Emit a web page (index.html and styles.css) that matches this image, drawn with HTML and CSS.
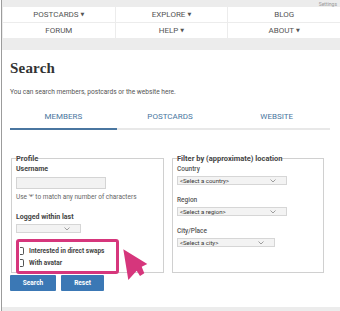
FILE: index.html
```html
<!DOCTYPE html>
<html lang="en">
  <head>
    <meta charset="utf-8" />
    <title>Search</title>
    <link rel="stylesheet" href="styles.css">
  </head>
  <body>
    <div class="page">
      <div class="topbar"><span class="settings">Settings</span></div>
      <nav class="nav">
        <a class="nav-cell">POSTCARDS <span class="caret">&#9660;</span></a>
        <a class="nav-cell">EXPLORE <span class="caret">&#9660;</span></a>
        <a class="nav-cell">BLOG</a>
        <a class="nav-cell">FORUM</a>
        <a class="nav-cell">HELP <span class="caret">&#9660;</span></a>
        <a class="nav-cell">ABOUT <span class="caret">&#9660;</span></a>
      </nav>

      <div class="main">
        <h1>Search</h1>
        <p class="intro">You can search members, postcards or the website here.</p>

        <div class="tabs">
          <div class="tab active">MEMBERS</div>
          <div class="tab">POSTCARDS</div>
          <div class="tab">WEBSITE</div>
        </div>

        <div class="forms">
          <fieldset class="box profile">
            <legend>Profile</legend>
            <div class="label">Username</div>
            <div class="input"></div>
            <div class="hint">Use '*' to match any number of characters</div>
            <div class="label logged">Logged within last</div>
            <div class="select small"><span></span>
              <svg class="chev" width="6" height="4" viewBox="0 0 6 4"><path d="M0.5 0.5 L3 3 L5.5 0.5" fill="none" stroke="#888" stroke-width="0.8"/></svg>
            </div>
            <div class="marked">
              <div class="check"><span class="cb"></span>Interested in direct swaps</div>
              <div class="check"><span class="cb"></span>With avatar</div>
            </div>
          </fieldset>

          <fieldset class="box filter">
            <legend>Filter by (approximate) location</legend>
            <div class="label thin">Country</div>
            <div class="select"><span>&lt;Select a country&gt;</span>
              <svg class="chev" width="6" height="4" viewBox="0 0 6 4"><path d="M0.5 0.5 L3 3 L5.5 0.5" fill="none" stroke="#888" stroke-width="0.8"/></svg>
            </div>
            <div class="label thin gap">Region</div>
            <div class="select"><span>&lt;Select a region&gt;</span>
              <svg class="chev" width="6" height="4" viewBox="0 0 6 4"><path d="M0.5 0.5 L3 3 L5.5 0.5" fill="none" stroke="#888" stroke-width="0.8"/></svg>
            </div>
            <div class="label thin gap">City/Place</div>
            <div class="select city"><span>&lt;Select a city&gt;</span>
              <svg class="chev" width="6" height="4" viewBox="0 0 6 4"><path d="M0.5 0.5 L3 3 L5.5 0.5" fill="none" stroke="#888" stroke-width="0.8"/></svg>
            </div>
          </fieldset>
        </div>

        <div class="buttons">
          <button class="btn search">Search</button>
          <button class="btn reset">Reset</button>
        </div>
      </div>

      <div class="footer"></div>

      <!-- annotation arrow -->
      <svg class="pointer" width="32" height="38" viewBox="0 0 32 38">
        <polygon points="3.3,3.3 27.3,18 21.7,20.7 24.3,27.3 20,30 16.7,24.7 8.3,34" fill="#d6367c"/>
      </svg>
    </div>
  </body>
</html>
```

FILE: styles.css
```css
body{
  margin: 0;
  background: #fff;
  font-family: Roboto, "Liberation Sans", sans-serif;
  color: #444;
}
.page{
  position: relative;
  margin-left: 1px;
  border-left: 1px solid #9c9c9c;
  min-height: 311px;
}
.topbar{
  height: 7px;
  background: #ececec;
  text-align: right;
  padding-right: 3px;
}
.settings{
  display: inline-block;
  font-size: 5px;
  line-height: 5px;
  margin-top: 2px;
  color: #999;
  white-space: nowrap;
  vertical-align: top;
}
.nav{
  display: grid;
  grid-template-columns: 1fr 1fr 1fr;
  gap: 1px;
  background: #ececec;
  padding: 0 0 12px 1px;
}
.nav-cell{
  background: #fff;
  height: 15px;
  line-height: 15px;
  text-align: center;
  font-size: 8px;
  color: #555;
}
.caret{
  font-family: "DejaVu Sans", sans-serif;
  font-size: 5px;
  vertical-align: 1px;
}

.main{
  padding: 0 10px 0 8px;
}
h1{
  font-family: "Liberation Serif", serif;
  font-weight: bold;
  font-size: 15px;
  line-height: 18px;
  margin: 9px 0 0;
  color: #333;
  letter-spacing: 0.2px;
}
.intro{
  font-size: 6.6px;
  line-height: 8px;
  margin: 11px 0 0;
  color: #555;
}

.tabs{
  display: flex;
  margin-top: 16px;
}
.tab{
  flex: 1;
  text-align: center;
  font-size: 8px;
  line-height: 10px;
  padding-bottom: 6px;
  color: #4a76a0;
  border-bottom: 2px solid #e8e8e8;
}
.tab.active{
  border-bottom-color: #4a76a0;
}

.forms{
  display: flex;
  gap: 8px;
  margin-top: 24px;
  padding-left: 1px;
}
.box{
  margin: 0;
  border: 1px solid #d0d0d0;
  padding: 0 4px;
  min-width: 0;
}
.profile{
  width: 153px;
  box-sizing: border-box;
  padding-bottom: 0;
}
.filter{
  width: 152px;
  box-sizing: border-box;
  height: 119px;
}
legend{
  font-size: 7.5px;
  font-weight: bold;
  line-height: 9px;
  padding: 0;
  color: #444;
}
.label{
  font-size: 7px;
  font-weight: bold;
  line-height: 9px;
  margin-top: 2px;
  color: #444;
}
.label.thin{
  font-weight: 500;
  font-size: 6.5px;
  color: #555;
}
.label.gap{
  margin-top: 11px;
}
.label.logged{
  margin-top: 12px;
}
.input{
  width: 90px;
  height: 12px;
  box-sizing: border-box;
  margin-top: 3px;
  background: #f2f2f2;
  border: 1px solid #d4d4d4;
}
.hint{
  font-size: 6.5px;
  line-height: 8px;
  margin-top: 4px;
  color: #666;
}
.select{
  display: flex;
  align-items: center;
  justify-content: space-between;
  width: 110px;
  height: 9px;
  box-sizing: border-box;
  margin-top: 2px;
  padding: 0 10px 0 2px;
  background: #f3f3f3;
  border: 1px solid #d6d6d6;
  font-size: 6px;
  color: #333;
}
.select.small{
  width: 65px;
}
.select.city{
  width: 98px;
}
.chev{
  display: block;
}

.marked{
  width: 103px;
  height: 35px;
  box-sizing: border-box;
  margin: 6px 0 -2px 0;
  border: 3px solid #d6367c;
  border-radius: 3px;
  padding-top: 3px;
}
.check{
  display: flex;
  align-items: center;
  height: 12px;
  font-size: 6.5px;
  font-weight: bold;
  color: #444;
}
.cb{
  display: inline-block;
  width: 3px;
  height: 6px;
  border: 1px solid #555;
  border-left: none;
  border-radius: 0 2px 2px 0;
  margin: 0 5px 0 1px;
}

.buttons{
  display: flex;
  gap: 5px;
  margin-top: 2px;
}
.btn{
  height: 16px;
  border: none;
  border-radius: 1px;
  background: #3b78b5;
  color: #fff;
  font-family: Roboto, sans-serif;
  font-weight: bold;
  font-size: 6.5px;
  padding: 0;
}
.btn.search{
  width: 46px;
}
.btn.reset{
  width: 43px;
}

.footer{
  position: absolute;
  left: 0;
  right: 0;
  bottom: 0;
  height: 4px;
  background: #ececec;
}
.pointer{
  position: absolute;
  left: 118px;
  top: 246px;
}
```
